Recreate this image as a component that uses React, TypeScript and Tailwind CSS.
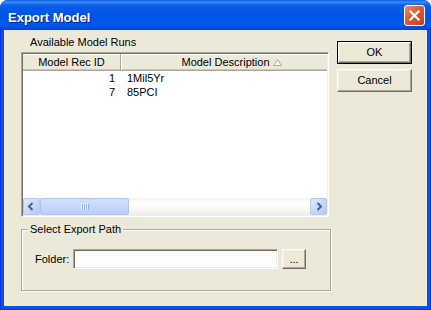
import React from "react";

const runs = [
  { id: 1, desc: "1Mil5Yr" },
  { id: 7, desc: "85PCI" },
];

// classic 3D raised / sunken edges
const raised =
  "bg-[#ECE9D8] border border-t-white border-l-white border-r-[#716F64] border-b-[#716F64] shadow-[inset_-1px_-1px_0_#ACA899,inset_1px_1px_0_#F1EFE2]";
const sunken =
  "bg-white border border-t-[#ACA899] border-l-[#ACA899] border-r-white border-b-white shadow-[inset_1px_1px_0_#716F64,inset_-1px_-1px_0_#F1EFE2]";

const ScrollArrow = ({ dir }: { dir: "left" | "right" }) => (
  <div className="w-[17px] h-[17px] shrink-0 rounded-[2px] border border-[#B4C8F6] bg-[linear-gradient(135deg,#E2EAFE_0%,#C6D6FC_55%,#B4C8F7_100%)] flex items-center justify-center">
    <svg width="15" height="15" viewBox="0 0 15 15">
      <polyline
        points={dir === "left" ? "8.5,4 5,7.5 8.5,11" : "6.5,4 10,7.5 6.5,11"}
        fill="none"
        stroke="#4D6185"
        strokeWidth="2"
      />
    </svg>
  </div>
);

export default function App() {
  return (
    <div className="w-[431px] h-[310px] flex flex-col rounded-t-[8px] overflow-hidden bg-[#0055E5] font-['Liberation_Sans',Arial,sans-serif] text-[11px] leading-[13px] text-black select-none">
      {/* title bar */}
      <div className="h-[30px] shrink-0 flex items-center justify-between pl-[8px] pr-[6px] bg-[linear-gradient(180deg,#0A5DE8_0%,#3D8BF7_7%,#0A5EEA_17%,#0055E5_50%,#0059EE_82%,#0046D5_100%)]">
        <span className="mt-[4px] text-white font-bold text-[13px] leading-[15px] [text-shadow:1px_1px_0_#0F1E8A]">
          Export Model
        </span>
        <div className="w-[21px] h-[21px] rounded-[3px] border border-white bg-[linear-gradient(135deg,#EE8A6C_0%,#DE5A36_45%,#C4401E_100%)] flex items-center justify-center">
          <svg width="13" height="13" viewBox="0 0 13 13">
            <path d="M2.5 2.5 L10.5 10.5 M10.5 2.5 L2.5 10.5" stroke="#fff" strokeWidth="2.2" strokeLinecap="square" />
          </svg>
        </div>
      </div>

      {/* frame + client */}
      <div className="flex-1 flex px-[3px] pb-[3px] border-x border-b border-[#0831D9]">
        <div className="flex-1 bg-[#ECE9D8] flex pl-[17px]">
          <div className="w-[310px] flex flex-col">
            <div className="h-[19px] pt-[6px] pl-[9px]">Available Model Runs</div>

            {/* list view */}
            <div className={`w-[308px] h-[165px] mt-[3px] p-[1px] flex flex-col ${sunken}`}>
              <div className="h-[17px] shrink-0 flex overflow-hidden bg-[#ECE9D8] border-b border-[#ACA899] shadow-[inset_0_-1px_0_#CBC7B8,inset_0_1px_0_#fff]">
                <div className="w-[98px] shrink-0 flex items-center justify-center border-r border-[#ACA899]">
                  Model Rec ID
                </div>
                <div className="w-[220px] shrink-0 flex items-center justify-center gap-[3px] border-l border-white">
                  <span>Model Description</span>
                  <svg width="9" height="7" viewBox="0 0 9 7">
                    <polygon points="0.5,6.5 4.5,0.5 8.5,6.5" fill="#F4F3EE" stroke="#ACA899" />
                  </svg>
                </div>
              </div>

              <div className="flex-1 flex flex-col">
                {runs.map((r) => (
                  <div key={r.id} className="h-[14px] flex items-center">
                    <div className="w-[98px] shrink-0 text-right pr-[6px]">{r.id}</div>
                    <div className="pl-[6px]">{r.desc}</div>
                  </div>
                ))}
              </div>

              {/* horizontal scrollbar */}
              <div className="h-[17px] shrink-0 flex bg-[linear-gradient(180deg,#F3F1EC_0%,#FEFEFB_25%,#F8F7F3_70%,#EEEDE5_100%)]">
                <ScrollArrow dir="left" />
                <div className="w-[89px] h-full rounded-[2px] border border-[#B0C4F4] bg-[linear-gradient(180deg,#D4E0FD_0%,#C6D6FB_50%,#BBCEFA_100%)] flex items-center justify-center">
                  <svg width="8" height="7" viewBox="0 0 8 7">
                    <path d="M0.5 0 V7 M2.5 0 V7 M4.5 0 V7 M6.5 0 V7" stroke="#EEF4FE" />
                    <path d="M1.5 1 V7 M3.5 1 V7 M5.5 1 V7 M7.5 1 V7" stroke="#8CB0F8" />
                  </svg>
                </div>
                <div className="flex-1" />
                <ScrollArrow dir="right" />
              </div>
            </div>

            {/* group box */}
            <div className="relative mt-[12px] h-[62px] border border-[#ACA899] shadow-[1px_1px_0_#fff,inset_1px_1px_0_#fff]">
              <span className="absolute -top-[7px] left-[6px] px-[2px] bg-[#ECE9D8]">Select Export Path</span>
              <div className="flex items-center pt-[19px] pl-[13px]">
                <span className="w-[38px] shrink-0">Folder:</span>
                <div className={`w-[205px] h-[20px] ${sunken}`} />
                <div className={`ml-[4px] w-[24px] h-[20px] flex items-end justify-center pb-[4px] ${raised}`}>
                  <span className="leading-[10px]">...</span>
                </div>
              </div>
            </div>
          </div>

          {/* buttons */}
          <div className="ml-[6px] pt-[11px] flex flex-col gap-[5px]">
            <div className="w-[75px] h-[23px] border border-black">
              <div className={`h-full flex items-center justify-center ${raised}`}>OK</div>
            </div>
            <div className={`w-[75px] h-[23px] flex items-center justify-center ${raised}`}>Cancel</div>
          </div>
        </div>
      </div>
    </div>
  );
}
